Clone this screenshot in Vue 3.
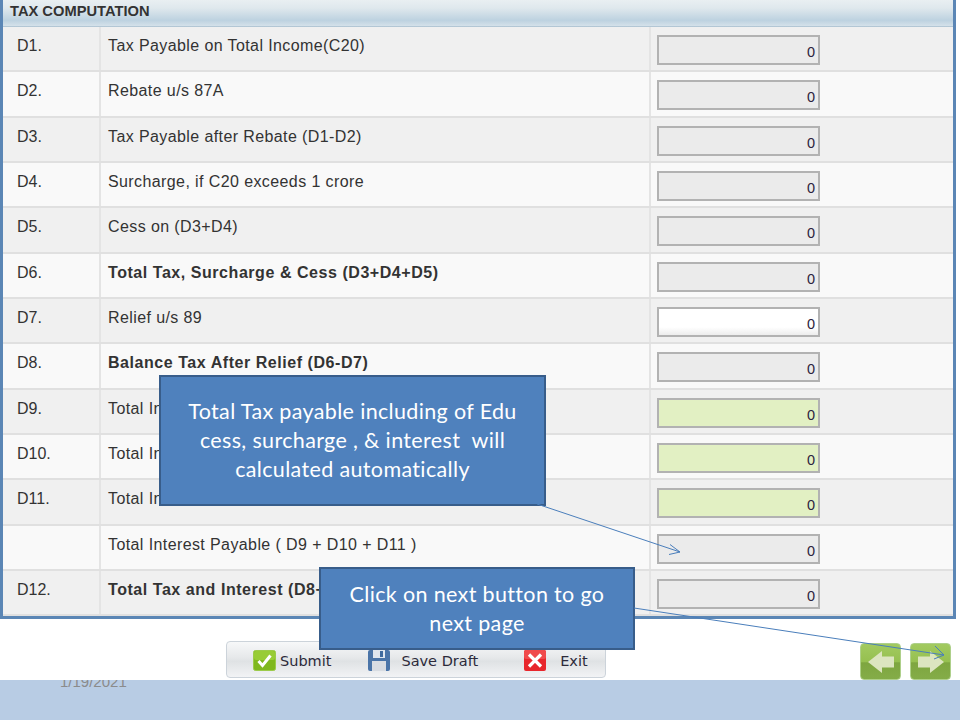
<script setup>
const rows = [
  { id: 'D1.', label: 'Tax Payable on Total Income(C20)', kind: 'off' },
  { id: 'D2.', label: 'Rebate u/s 87A', kind: 'off' },
  { id: 'D3.', label: 'Tax Payable after Rebate (D1-D2)', kind: 'off' },
  { id: 'D4.', label: 'Surcharge, if C20 exceeds 1 crore', kind: 'off' },
  { id: 'D5.', label: 'Cess on (D3+D4)', kind: 'off' },
  { id: 'D6.', label: 'Total Tax, Surcharge & Cess (D3+D4+D5)', kind: 'off', bold: true },
  { id: 'D7.', label: 'Relief u/s 89', kind: 'on' },
  { id: 'D8.', label: 'Balance Tax After Relief (D6-D7)', kind: 'off', bold: true },
  { id: 'D9.', label: 'Total Interest u/s 234A', kind: 'calc' },
  { id: 'D10.', label: 'Total Interest u/s 234B', kind: 'calc' },
  { id: 'D11.', label: 'Total Interest u/s 234C', kind: 'calc' },
  { id: '', label: 'Total Interest Payable ( D9 + D10 + D11 )', kind: 'off' },
  { id: 'D12.', label: 'Total Tax and Interest (D8+D9+D10+D11)', kind: 'off', bold: true }
]
</script>

<template>
  <div class="page">
    <section class="panel">
      <h2 class="head">TAX COMPUTATION</h2>
      <div class="table">
        <div v-for="(r, i) in rows" :key="i" class="row" :class="{ alt: i % 2 === 1 }">
          <div class="cell id">{{ r.id }}</div>
          <div class="cell label" :class="{ bold: r.bold }">{{ r.label }}</div>
          <div class="cell val"><div class="input" :class="r.kind">0</div></div>
        </div>
      </div>
    </section>

    <div class="actions">
      <div class="toolbar">
        <span class="btn submit">
          <svg width="23" height="21" viewBox="0 0 23 21"><rect x="0.5" y="0.5" width="22" height="20" rx="2" fill="#7fb81e" stroke="#9ccb4a"/><rect x="1" y="1" width="21" height="9" rx="2" fill="#98cc35"/><path d="M5.5 11l4 4.5 8-10" fill="none" stroke="#fff" stroke-width="3"/></svg>
          <span>Submit</span>
        </span>
        <span class="btn save">
          <svg width="22" height="21" viewBox="0 0 22 21"><path d="M2 0h18a2 2 0 0 1 2 2v17a2 2 0 0 1-2 2H2a2 2 0 0 1-2-2V2a2 2 0 0 1 2-2z" fill="#4a74a8"/><rect x="5" y="0" width="12" height="8" fill="#dfe6ef"/><rect x="12" y="1" width="3" height="6" fill="#3f6a9e"/><rect x="4" y="11" width="14" height="10" fill="#d8dce2"/></svg>
          <span>Save Draft</span>
        </span>
        <span class="btn exit">
          <svg width="22" height="21" viewBox="0 0 22 21"><rect width="22" height="21" rx="2" fill="#e8262c"/><rect width="22" height="9" rx="2" fill="#f04a4c"/><path d="M5 4.5l12 12M17 4.5l-12 12" stroke="#fff" stroke-width="3.2"/></svg>
          <span>Exit</span>
        </span>
      </div>
      <div class="nav">
        <span class="arrow">
          <svg width="26" height="22" viewBox="0 0 26 22"><path d="M0 11L14 0v5.500h12v11H14V22z" fill="#dce5c0"/></svg>
        </span>
        <span class="arrow">
          <svg width="26" height="22" viewBox="0 0 26 22"><path d="M26 11L12 0v5.500H0v11h12V22z" fill="#dce5c0"/></svg>
        </span>
      </div>
    </div>

    <footer class="band"><span class="date">1/19/2021</span></footer>

    <div class="callout one">Total Tax payable including of Edu<br>cess, surcharge , &amp; interest &nbsp;will<br>calculated automatically</div>
    <div class="callout two">Click on next button to go<br>next page</div>

    <svg class="lines" width="960" height="720" viewBox="0 0 960 720">
      <g fill="none" stroke="#4a7ebb" stroke-width="1">
        <path d="M537 504L680 552M670 544.500L680 552L669 554.500"/>
        <path d="M634 608L944 655M935 646L944 655L934 659"/>
      </g>
    </svg>
  </div>
</template>

<style scoped>
.page {
  position: relative;
  width: 960px;
  height: 720px;
  overflow: hidden;
  background: #fff;
  display: flex;
  flex-direction: column;
  font-family: "Liberation Sans", Arial, sans-serif;
}
.panel {
  width: 956px;
  box-sizing: border-box;
  border-left: 3px solid #5b86b5;
  border-right: 3px solid #5b86b5;
  border-bottom: 3px solid #5b86b5;
}
.head {
  margin: 0;
  height: 27px;
  box-sizing: border-box;
  padding: 3px 0 0 7px;
  font-size: 14.700px;
  line-height: 16px;
  font-weight: 700;
  color: #333;
  background: linear-gradient(#e9eff2 0, #dfe8ed 30%, #bdd2e0 75%, #d3e0e9 95%, #9fb8c9 100%);
}
.row {
  display: grid;
  grid-template-columns: 98px 550px 1fr;
  height: 45.330px;
  box-sizing: border-box;
  background: #f0f0f0;
  border-bottom: 2px solid #e0e0e0;
}
.row.alt { background: #f9f9f9; }
.cell {
  box-sizing: border-box;
  border-right: 2px solid #e4e4e4;
  color: #333;
  font-size: 16px;
  line-height: 18px;
  padding-top: 10px;
}
.id { padding-left: 14px; }
.label { padding-left: 7px; letter-spacing: 0.4px; }
.bold { font-weight: 700; letter-spacing: 0.55px; }
.val { border-right: 0; padding: 8px 0 0 6px; }
.input {
  width: 163px;
  height: 30px;
  box-sizing: border-box;
  border: 2px solid #b2b2b2;
  background: #ebebeb;
  text-align: right;
  padding: 7px 3px 0 0;
  font-size: 14.500px;
  line-height: 16px;
  font-weight: 400;
  color: #2c2440;
}
.input.on { background: linear-gradient(#fff 70%, #ececec 100%); }
.input.calc { background: #e2f0c3; }
.actions {
  flex: 1;
  display: flex;
  align-items: flex-start;
  padding: 22px 9px 0 226px;
  min-height: 0;
}
.toolbar {
  width: 380px;
  height: 37px;
  box-sizing: border-box;
  border: 1px solid #ccd3da;
  border-radius: 4px;
  background: linear-gradient(#f7f8f9 0, #e6e8ea 45%, #dfe2e4 55%, #f2f3f5 100%);
  display: flex;
  align-items: center;
  padding: 2px 0 0 26px;
  font-family: "DejaVu Sans", sans-serif;
  font-size: 14.500px;
  color: #2c2a3a;
}
.btn { display: flex; align-items: center; }
.submit { gap: 4px; }
.save { margin-left: 37px; gap: 11px; }
.exit { margin-left: 46px; gap: 14px; }
.nav {
  margin-left: auto;
  display: flex;
  gap: 9px;
  margin-top: 2px;
}
.arrow {
  width: 41px;
  height: 37px;
  box-sizing: border-box;
  border: 1px solid #aed08a;
  border-radius: 4px;
  background: linear-gradient(#a2ca60 0, #96c050 50%, #7ea640 54%, #84ac48 100%);
  display: flex;
  align-items: center;
  justify-content: center;
}
.band {
  height: 40px;
  flex: none;
  background: #b8cce4;
  overflow: hidden;
  position: relative;
}
.date {
  position: absolute;
  left: 60px;
  top: -7px;
  font-size: 15px;
  line-height: 18px;
  color: #8b8b8b;
}
.callout {
  position: absolute;
  box-sizing: border-box;
  background: #4f81bd;
  border: 2px solid #385d8a;
  color: #fff;
  text-align: center;
  font-family: Lato, "Open Sans", sans-serif;
  font-size: 21.500px;
  letter-spacing: 0.35px;
  line-height: 29px;
  display: flex;
  align-items: center;
  justify-content: center;
}
.one { left: 159px; top: 375px; width: 387px; height: 131px; }
.two { left: 319px; top: 567px; width: 316px; height: 83px; }
.lines { position: absolute; left: 0; top: 0; pointer-events: none; }
</style>
